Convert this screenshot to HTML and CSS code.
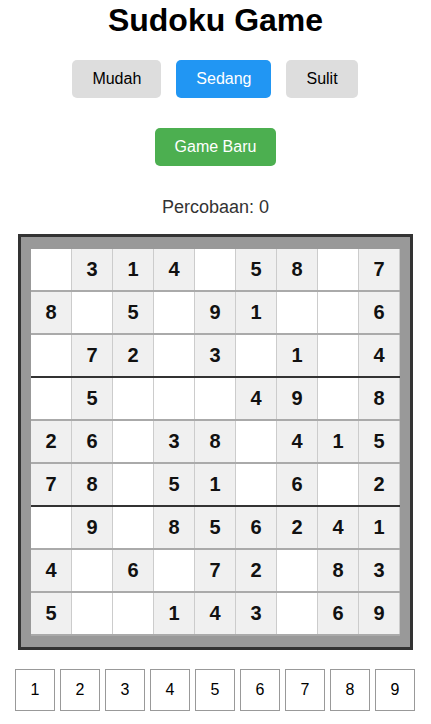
FILE: index.html
```html
<!DOCTYPE html>
<html lang="id">
<head>
<meta charset="utf-8">
<title>Sudoku Game</title>
<link rel="stylesheet" href="styles.css">
</head>
<body>
<div class="app">
  <h1 class="title">Sudoku Game</h1>
  <div class="levels">
    <button class="btn btn-level">Mudah</button>
    <button class="btn btn-level active">Sedang</button>
    <button class="btn btn-level">Sulit</button>
  </div>
  <button class="btn btn-new">Game Baru</button>
  <p class="attempts">Percobaan: 0</p>
  <div class="board">
    <div class="row"><div class="cell"></div><div class="cell given">3</div><div class="cell given">1</div><div class="cell given">4</div><div class="cell"></div><div class="cell given">5</div><div class="cell given">8</div><div class="cell"></div><div class="cell given">7</div></div>
    <div class="row"><div class="cell given">8</div><div class="cell"></div><div class="cell given">5</div><div class="cell"></div><div class="cell given">9</div><div class="cell given">1</div><div class="cell"></div><div class="cell"></div><div class="cell given">6</div></div>
    <div class="row box-end"><div class="cell"></div><div class="cell given">7</div><div class="cell given">2</div><div class="cell"></div><div class="cell given">3</div><div class="cell"></div><div class="cell given">1</div><div class="cell"></div><div class="cell given">4</div></div>
    <div class="row"><div class="cell"></div><div class="cell given">5</div><div class="cell"></div><div class="cell"></div><div class="cell"></div><div class="cell given">4</div><div class="cell given">9</div><div class="cell"></div><div class="cell given">8</div></div>
    <div class="row"><div class="cell given">2</div><div class="cell given">6</div><div class="cell"></div><div class="cell given">3</div><div class="cell given">8</div><div class="cell"></div><div class="cell given">4</div><div class="cell given">1</div><div class="cell given">5</div></div>
    <div class="row box-end"><div class="cell given">7</div><div class="cell given">8</div><div class="cell"></div><div class="cell given">5</div><div class="cell given">1</div><div class="cell"></div><div class="cell given">6</div><div class="cell"></div><div class="cell given">2</div></div>
    <div class="row"><div class="cell"></div><div class="cell given">9</div><div class="cell"></div><div class="cell given">8</div><div class="cell given">5</div><div class="cell given">6</div><div class="cell given">2</div><div class="cell given">4</div><div class="cell given">1</div></div>
    <div class="row"><div class="cell given">4</div><div class="cell"></div><div class="cell given">6</div><div class="cell"></div><div class="cell given">7</div><div class="cell given">2</div><div class="cell"></div><div class="cell given">8</div><div class="cell given">3</div></div>
    <div class="row"><div class="cell given">5</div><div class="cell"></div><div class="cell"></div><div class="cell given">1</div><div class="cell given">4</div><div class="cell given">3</div><div class="cell"></div><div class="cell given">6</div><div class="cell given">9</div></div>
  </div>
  <div class="numpad">
    <button class="num">1</button><button class="num">2</button><button class="num">3</button><button class="num">4</button><button class="num">5</button><button class="num">6</button><button class="num">7</button><button class="num">8</button><button class="num">9</button>
  </div>
</div>
</body>
</html>
```

FILE: styles.css
```css
* { box-sizing: border-box; }
html, body { margin: 0; padding: 0; background: #fff; }
body { font-family: "Liberation Sans", Arial, sans-serif; color: #000; }
.app {
  display: flex;
  flex-direction: column;
  align-items: center;
  padding-top: 0;
}
.title {
  margin: 0;
  font-size: 32px;
  font-weight: bold;
  line-height: 40px;
  height: 40px;
}
.levels {
  display: flex;
  gap: 15px;
  margin-top: 20px;
  margin-right: 1px;
}
.btn {
  font-family: "Liberation Sans", Arial, sans-serif;
  font-size: 16px;
  border: none;
  border-radius: 5px;
  height: 38px;
  padding: 0 20px;
  cursor: pointer;
}
.btn-level { background: #ddd; color: #000; }
.btn-level.active { background: #2196f3; color: #fff; }
.btn-new {
  margin-top: 30px;
  background: #4caf50;
  color: #fff;
}
.attempts {
  margin: 30px 0 0;
  font-size: 18px;
  line-height: 22px;
  color: #333;
}
.board {
  margin-top: 16px;
  border: 3px solid #333;
  background: #999;
  padding: 12px 10px 11px;
  display: flex;
  flex-direction: column;
}
.row {
  display: flex;
  border-bottom: 2px solid #aaa;
}
.row.box-end { border-bottom-color: #333; }
.cell {
  width: 41px;
  height: 41px;
  border-right: 1px solid #ccc;
  background: #fff;
  display: flex;
  align-items: center;
  justify-content: center;
  font-size: 20px;
  font-weight: bold;
  color: #111;
}
.cell.given { background: #f0f0f0; }
.numpad {
  display: flex;
  gap: 5px;
  margin-top: 19px;
  margin-right: 1px;
}
.num {
  width: 40px;
  height: 42px;
  border: 1px solid #999;
  background: #fff;
  font-family: "Liberation Sans", Arial, sans-serif;
  font-size: 16px;
  color: #000;
  padding: 0;
}
```
